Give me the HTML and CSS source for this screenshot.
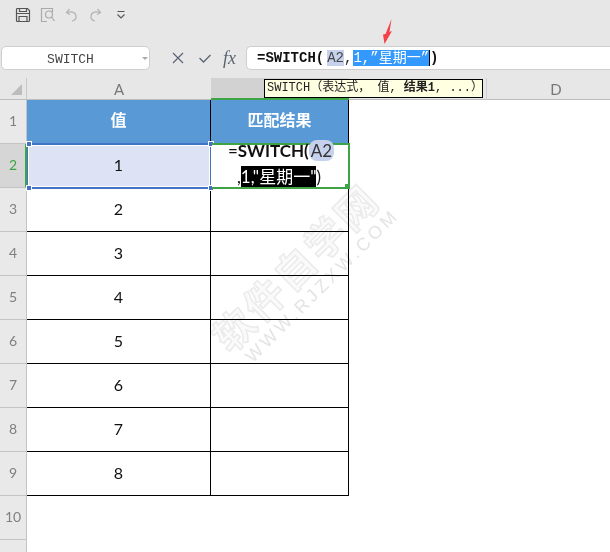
FILE: index.html
```html
<!DOCTYPE html>
<html lang="zh">
<head>
<meta charset="utf-8">
<title>SWITCH</title>
<link rel="stylesheet" href="styles.css">
</head>
<body>
<div class="app">
  <div class="quick">
    <svg class="qi" width="16" height="16" viewBox="0 0 16 16" fill="none" stroke="#555" stroke-width="1.2"><path d="M2.500 1.500h10l2 2v10a1 1 0 0 1-1 1h-11a1 1 0 0 1-1-1v-11a1 1 0 0 1 1-1z"/><path d="M4.500 1.500v3h7v-3M1.500 6.500h13M4 14.500v-5h8v5"/></svg>
    <svg class="qi" width="16" height="16" viewBox="0 0 16 16" fill="none" stroke="#aaa" stroke-width="1.2"><path d="M12.500 5V1.500h-11v13H7"/><circle cx="9" cy="7.500" r="3.500"/><path d="M11.500 10l3 4"/></svg>
    <svg class="qi" width="14" height="14" viewBox="0 0 14 14" fill="none" stroke="#b4b4b4" stroke-width="1.2"><path d="M4.500 1L1.500 4.500l3.500 2"/><path d="M1.500 4.500c4-1.500 9-.5 9.500 3.500.3 2.500-1.500 4.500-4 5"/></svg>
    <svg class="qi" width="14" height="14" viewBox="0 0 14 14" fill="none" stroke="#b4b4b4" stroke-width="1.2"><path d="M9.500 1l3 3.500-3.500 2"/><path d="M12.500 4.500c-4-1.500-9-.5-9.500 3.500-.3 2.500 1.500 4.500 4 5"/></svg>
    <svg class="qi drop" width="10" height="10" viewBox="0 0 10 10" fill="none" stroke="#555" stroke-width="1.1"><path d="M1.500 1.500h7M1.500 4.500L5 8l3.500-3.500"/></svg>
  </div>
  <div class="fbar">
    <div class="namebox"><span class="name">SWITCH</span><span class="caret"></span></div>
    <div class="fbtns">
      <svg width="14" height="14" viewBox="0 0 14 14" fill="none" stroke="#5a6472" stroke-width="1.2"><path d="M2 2l10 10M12 2L2 12"/></svg>
      <svg width="14" height="14" viewBox="0 0 14 14" fill="none" stroke="#5a6472" stroke-width="1.3"><path d="M1.500 7l4 4 7-7"/></svg>
      <span class="fx">fx</span>
    </div>
    <div class="finput"><b>=SWITCH(</b><span class="ref">A2</span>,<span class="sel">1,”星期一”</span><b class="close">)</b></div>
  </div>
  <div class="sheet">
    <div class="corner"><span class="tri"></span></div>
    <div class="ch">A</div>
    <div class="ch active"></div>
    <div class="ch bare"></div>
    <div class="ch last">D</div>

    <div class="rh">1</div><div class="cell head">值</div><div class="cell head">匹配结果</div><div class="blank"></div>
    <div class="rh cur">2</div><div class="cell a2">1</div><div class="cell"></div><div class="blank"></div>
    <div class="rh">3</div><div class="cell">2</div><div class="cell"></div><div class="blank"></div>
    <div class="rh">4</div><div class="cell">3</div><div class="cell"></div><div class="blank"></div>
    <div class="rh">5</div><div class="cell">4</div><div class="cell"></div><div class="blank"></div>
    <div class="rh">6</div><div class="cell">5</div><div class="cell"></div><div class="blank"></div>
    <div class="rh">7</div><div class="cell">6</div><div class="cell"></div><div class="blank"></div>
    <div class="rh">8</div><div class="cell">7</div><div class="cell"></div><div class="blank"></div>
    <div class="rh">9</div><div class="cell">8</div><div class="cell"></div><div class="blank"></div>
    <div class="rh">10</div><div class="none"></div><div class="none"></div><div class="blank"></div>
    <div class="rh end"></div><div class="none"></div><div class="none"></div><div class="blank"></div>

    <div class="sel-a"><span class="h tl"></span><span class="h tr"></span><span class="h bl"></span><span class="h br"></span></div>
    <div class="edit"><div class="l1"><span class="eq">=</span><b>SWITCH(</b><span class="pill">A2</span></div><div class="l2">,<span class="inv">1,"星期一"</span>)</div><span class="gh"></span></div>
    <div class="mark"><div class="m1">软件自学网</div><div class="m2">WWW.RJZXW.COM</div></div>
  </div>
  <div class="tip">SWITCH（表达式， 值, <b>结果1</b>, ...）</div>
  <svg class="arrow" width="14" height="28" viewBox="0 0 14 28"><path d="M11.500 1L9.500 14 12 13 4.500 26 3 16.500 5.500 16z" fill="#f5414a"/></svg>
</div>
</body>
</html>
```
FILE: styles.css
```css
* { box-sizing: border-box; }
html, body { margin: 0; padding: 0; background: #fff; }
body { width: 610px; height: 552px; overflow: hidden; font-family: "Lato", "Noto Sans CJK SC", sans-serif; }
.app { position: relative; width: 610px; height: 552px; overflow: hidden; }

.quick { height: 46px; background: #e7e7e7; display: flex; align-items: center; padding: 0 0 16px 15px; gap: 9px; }
.qi { flex: none; }
.qi.drop { margin-left: 5px; }

.fbar { height: 32px; background: #e7e7e7; display: flex; align-items: flex-start; padding-left: 1px; }
.namebox { width: 149px; height: 24px; background: #fff; border: 1px solid #cfcfcf; border-radius: 5px; position: relative; display: flex; align-items: center; justify-content: center; padding: 2px 10px 0 0; font: 13px "Liberation Mono", monospace; color: #444; }
.caret { position: absolute; right: 1px; top: 10px; width: 0; height: 0; border: 3px solid transparent; border-top: 3px solid #aaa; }
.fbtns { width: 96px; height: 24px; display: flex; align-items: center; padding-left: 21px; gap: 13px; flex: none; }
.fx { font: italic 18px "Liberation Serif", serif; color: #5a6472; margin-left: -2px; }
.finput { flex: 1; height: 24px; background: #fff; border: 1px solid #cfcfcf; border-right: 0; border-radius: 5px 0 0 5px; padding-left: 10px; font: 14px/22px "Liberation Mono", "Noto Sans CJK SC", monospace; color: #222; white-space: nowrap; }
.finput b { color: #111; }
.ref { background: #c6d1ee; color: #444; margin-left: 3px; }
.sel { background: #3399ff; color: #fff; margin-left: 1px; }
.close { border-left: 1px solid #000; }

.sheet { position: relative; display: grid; grid-template-columns: 27px 184px 138px 138px 138px; grid-template-rows: 22px repeat(10, 44px) 32px; height: 474px; }
.corner { background: #e7e7e7; border-right: 1px solid #c8c8c8; border-bottom: 1px solid #bdbdbd; position: relative; }
.tri { position: absolute; right: 4px; bottom: 4px; width: 0; height: 0; border-style: solid; border-width: 0 0 11px 11px; border-color: transparent transparent #bdbdbd transparent; }
.ch { background: #e7e7e7; border-bottom: 1px solid #bdbdbd; font-size: 15px; color: #777; display: flex; align-items: center; justify-content: center; }
.ch.bare { border-right: 1px solid #cfcfcf; }
.ch.active { background: #d2d2d2; border-bottom: 2px solid #3fa445; }
.rh { background: #e9e9e9; border-right: 1px solid #c4c4c4; border-bottom: 1px solid #c4c4c4; font-size: 14px; color: #808080; display: flex; align-items: center; justify-content: center; padding-bottom: 2px; }
.rh.cur { background: #d6d6d6; color: #3fa445; border-right: 2px solid #3fa445; padding-left: 1px; }
.rh.end { border-bottom: 0; }
.cell { border-right: 1px solid #000; border-bottom: 1px solid #000; display: flex; align-items: center; justify-content: center; font-size: 16px; color: #111; background: #fff; padding-bottom: 3px; }
.cell.a2 { background: #dde3f5; }
.cell.head { background: #5899d6; color: #fff; font-weight: 700; font-size: 16px; border-bottom-color: #5899d6; padding-bottom: 5px; }
.blank { background: #fff; grid-column: span 2; }
.none { background: #fff; }

.sel-a { position: absolute; left: 27px; top: 65px; width: 184px; height: 46px; border: 1px solid #4472c4; border-width: 2px 1px; box-shadow: inset 0 0 0 1px #fff; }
.h { position: absolute; width: 6px; height: 6px; background: #4472c4; border: 1px solid #fff; }
.tl { left: -2px; top: -4px; } .tr { right: -4px; top: -4px; } .bl { left: -2px; bottom: -4px; } .br { right: -4px; bottom: -4px; }
.edit { position: absolute; left: 212px; top: 65px; width: 138px; height: 46px; background: #fff; border: 2px solid #3fa445; border-left: 0; text-align: center; font-size: 17px; color: #111; }
.edit .l1 { height: 23px; line-height: 11px; padding-left: 2px; white-space: nowrap; }
.edit .l2 { line-height: 18px; padding-right: 2px; white-space: nowrap; }
.eq { font-weight: 400; }
.pill { background: #c6d1ee; border-radius: 8px; color: #333; padding: 0 2px; }
.inv { background: #000; color: #fff; }
.gh { position: absolute; right: -2px; bottom: -2px; width: 5px; height: 5px; background: #3fa445; }

.mark { position: absolute; left: 183px; top: 166px; width: 240px; height: 62px; transform: rotate(-45deg); text-align: center; pointer-events: none; mix-blend-mode: multiply; z-index: 3; }
.m1 { font-size: 40px; line-height: 43px; font-weight: 700; letter-spacing: 3px; color: #fafafa; -webkit-text-stroke: 1.500px #ebebeb; white-space: nowrap; margin: 0 -10px; }
.m2 { font-family: "Liberation Sans", sans-serif; font-size: 18px; line-height: 19px; letter-spacing: 3.500px; color: #e4e4e4; white-space: nowrap; margin: 0 -30px 0 -18px; }

.tip { position: absolute; left: 264px; top: 79px; width: 219px; height: 19px; background: #ffffe1; border: 1px solid #000; font: 12px/17px "Liberation Mono", "Noto Sans CJK SC", monospace; color: #222; padding-left: 2px; white-space: nowrap; overflow: hidden; z-index: 4; }
.arrow { position: absolute; left: 380px; top: 18px; }
```
